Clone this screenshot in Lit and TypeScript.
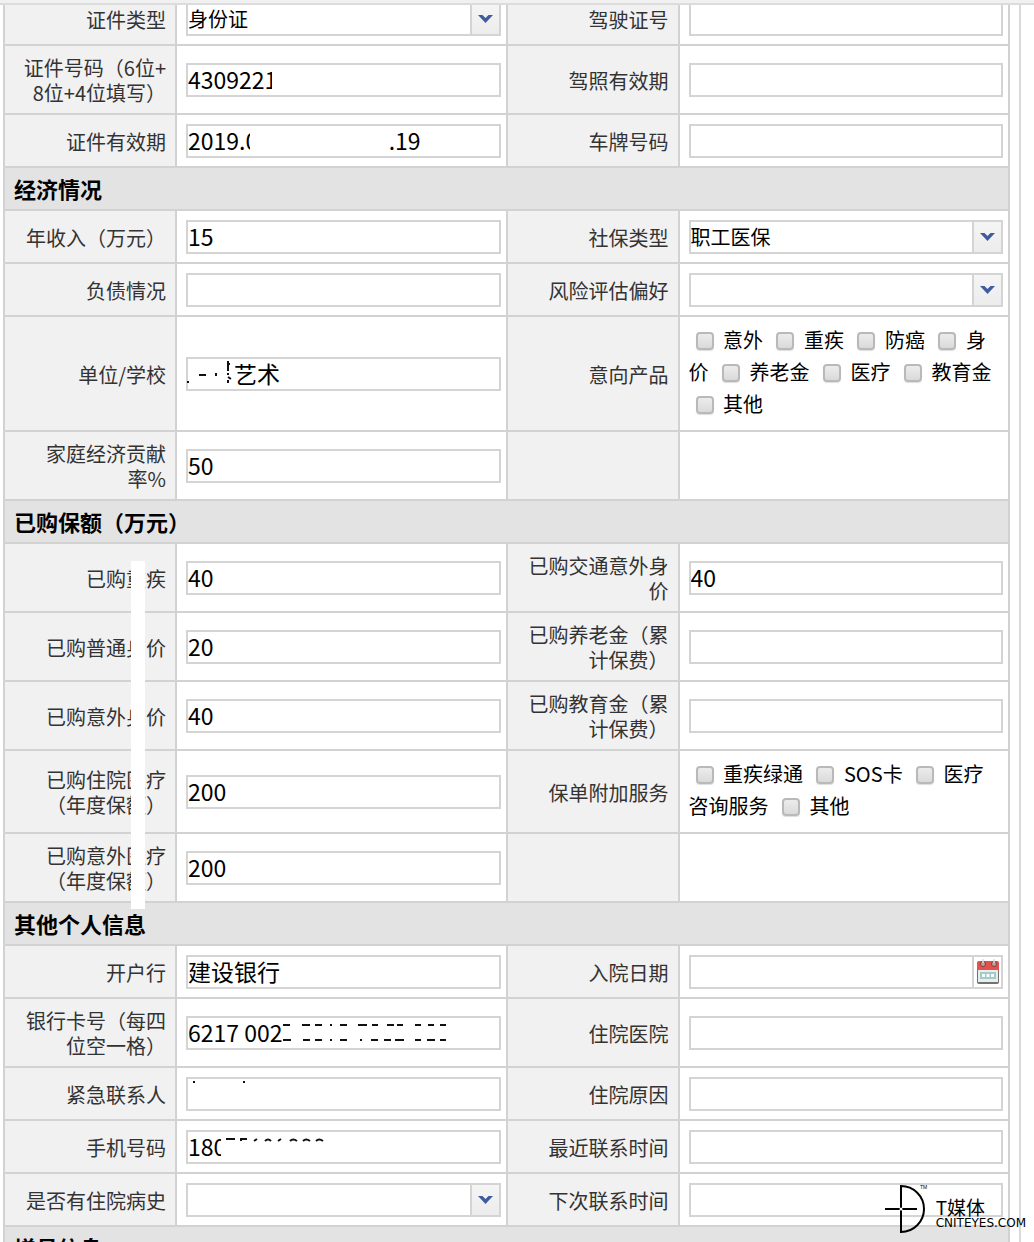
import { LitElement, html, svg, css, nothing, TemplateResult } from "lit";
import { customElement } from "lit/decorators.js";

type Field = {
  id?: string;
  label?: string;
  kind: "text" | "select" | "date" | "checks" | "empty";
  value?: string;
  options?: string[];
  cover?: [number, number][];
  marks?: string;
};

type Section = { title?: string; strip?: boolean; rows: [Field, Field][] };

const empty: Field = { kind: "empty" };
const gap = "\u3000";

const sections: Section[] = [
  {
    rows: [
      [
        { id: "idType", label: "证件类型", kind: "select", value: "身份证" },
        { id: "licenceNo", label: "驾驶证号", kind: "text" },
      ],
      [
        { id: "idNo", label: "证件号码（6位+\n8位+4位填写）", kind: "text", value: "4309221", cover: [[86, 12]] },
        { id: "licenceExpiry", label: "驾照有效期", kind: "text" },
      ],
      [
        {
          id: "idExpiry",
          label: "证件有效期",
          kind: "text",
          value: "2019.0" + gap.repeat(5) + "\u00a0\u00a0\u00a0.19",
          cover: [[64, 20]],
        },
        { id: "plate", label: "车牌号码", kind: "text" },
      ],
    ],
  },
  {
    title: "经济情况",
    rows: [
      [
        { id: "income", label: "年收入（万元）", kind: "text", value: "15" },
        { id: "social", label: "社保类型", kind: "select", value: "职工医保" },
      ],
      [
        { id: "debt", label: "负债情况", kind: "text" },
        { id: "risk", label: "风险评估偏好", kind: "select" },
      ],
      [
        {
          id: "employer",
          label: "单位/学校",
          kind: "text",
          value: gap.repeat(2) + "艺术",
          marks: "M1 25h2M13 18h7M30 16v3M42 4v10M42 7h2M42 16v2M42 20l3 2M42 23v3",
        },
        {
          id: "interest",
          label: "意向产品",
          kind: "checks",
          options: ["意外", "重疾", "防癌", "身价", "养老金", "医疗", "教育金", "其他"],
        },
      ],
      [{ id: "share", label: "家庭经济贡献\n率%", kind: "text", value: "50" }, empty],
    ],
  },
  {
    title: "已购保额（万元）",
    strip: true,
    rows: [
      [
        { id: "critical", label: "已购重疾", kind: "text", value: "40" },
        { id: "traffic", label: "已购交通意外身\n价", kind: "text", value: "40" },
      ],
      [
        { id: "life", label: "已购普通身价", kind: "text", value: "20" },
        { id: "pension", label: "已购养老金（累\n计保费）", kind: "text" },
      ],
      [
        { id: "accident", label: "已购意外身价", kind: "text", value: "40" },
        { id: "education", label: "已购教育金（累\n计保费）", kind: "text" },
      ],
      [
        { id: "hospital", label: "已购住院医疗\n（年度保额）", kind: "text", value: "200" },
        {
          id: "services",
          label: "保单附加服务",
          kind: "checks",
          options: ["重疾绿通", "SOS卡", "医疗咨询服务", "其他"],
        },
      ],
      [{ id: "accidentMed", label: "已购意外医疗\n（年度保额）", kind: "text", value: "200" }, empty],
    ],
  },
  {
    title: "其他个人信息",
    rows: [
      [
        { id: "bank", label: "开户行", kind: "text", value: "建设银行" },
        { id: "admitDate", label: "入院日期", kind: "date" },
      ],
      [
        {
          id: "card",
          label: "银行卡号（每四\n位空一格）",
          kind: "text",
          value: "6217 002",
          marks:
            "M97 9h7M116 9h8M129 9h7M144 9h2M154 9h7M172 9h9M186 9h6M201 9h7M211 9h6M229 9h6M242 9h6M254 9h6" +
            "M97 24h8M117 24h7M129 24h7M144 24h2M154 24h7M174 24h2M185 24h7M198 24h7M209 24h9M229 24h6M241 24h8M254 24h6",
        },
        { id: "hospitalName", label: "住院医院", kind: "text" },
      ],
      [
        { id: "emergency", label: "紧急联系人", kind: "text", marks: "M7 5h2M57 5h2" },
        { id: "reason", label: "住院原因", kind: "text" },
      ],
      [
        {
          id: "mobile",
          label: "手机号码",
          kind: "text",
          value: "180",
          cover: [[35, 12]],
          marks:
            "M40 9h9M55 11v-2h6M68 11l3-2M79 11q3-3 6 0M92 11l3-2M104 11q3-3 7 0M117 11q3-3 7 0M130 11q3-3 7 0",
        },
        { id: "lastContact", label: "最近联系时间", kind: "text" },
      ],
      [
        { id: "history", label: "是否有住院病史", kind: "select" },
        { id: "nextContact", label: "下次联系时间", kind: "text" },
      ],
    ],
  },
  { title: "增员信息", rows: [] },
];

const chevron = svg`<path d="M1 2h4.500l3 3 3-3h4.500l-7.500 8z" fill="#3f5c9c"/>`;

@customElement("app-root")
export class AppRoot extends LitElement {
  static styles = css`
    :host {
      display: block;
      position: relative;
      height: 100vh;
      overflow: hidden;
      background: #fff;
      color: #000;
      font-family: "Noto Sans CJK SC", sans-serif;
      font-size: 20px;
    }
    * {
      box-sizing: border-box;
    }
    .bar {
      position: relative;
      z-index: 1;
      height: 5px;
      background: #f1f1f1;
      border-bottom: 2px solid #dcdcdc;
    }
    .panel {
      margin-top: -12px;
      margin-right: 13px;
      padding: 0 9px 0 3px;
      border-right: 2px solid #d9d9d9;
    }
    .sheet {
      border-left: 2px solid #d2d2d2;
    }
    .section {
      position: relative;
    }
    .title {
      margin: 0;
      height: 43px;
      padding-left: 9px;
      line-height: 41px;
      font-size: 22px;
      font-weight: 700;
      background: #e3e3e3;
      border-right: 2px solid #d2d2d2;
      border-bottom: 2px solid #d2d2d2;
    }
    .row {
      display: grid;
      grid-template-columns: 172px 1fr 172px 1fr;
    }
    .cell {
      display: flex;
      align-items: center;
      min-width: 0;
      padding: 9px 5px 8px 9px;
      border-right: 2px solid #d2d2d2;
      border-bottom: 2px solid #d2d2d2;
    }
    .options {
      padding-top: 7px;
      padding-bottom: 10px;
    }
    .name {
      justify-content: flex-end;
      padding-right: 9px;
      padding-left: 0;
      background: #f1f1f1;
      color: #333;
      line-height: 25px;
      text-align: right;
      white-space: pre;
    }
    .box {
      flex: 1;
      display: grid;
      grid-template-columns: minmax(0, 1fr) auto;
      height: 34px;
      border: 2px solid #d4d4d4;
      background: #fff;
    }
    .input,
    .select {
      grid-area: 1 / 1 / 2 / 3;
      width: 100%;
      height: 30px;
      margin: 0;
      padding: 0 0 3px;
      border: 0;
      outline: 0;
      border-radius: 0;
      background: transparent;
      color: #000;
      font-family: inherit;
      font-size: 23px;
      appearance: none;
    }
    .select {
      font-size: 20px;
    }
    .arrow {
      grid-area: 1 / 2;
      display: flex;
      align-items: center;
      justify-content: center;
      width: 29px;
      border-left: 2px solid #d4d4d4;
      background: linear-gradient(#f5f5f5, #ececec);
      pointer-events: none;
    }
    .pick {
      grid-area: 1 / 2;
      width: 29px;
      margin: 0;
      padding: 0;
      border: 0;
      border-left: 2px solid #d4d4d4;
      background: #fff;
      line-height: 0;
    }
    .marks {
      grid-area: 1 / 1;
      width: 280px;
      height: 34px;
      margin: -2px;
      pointer-events: none;
    }
    .checks {
      line-height: 32px;
    }
    .check {
      margin-right: 2px;
    }
    .tick {
      appearance: none;
      width: 18px;
      height: 18px;
      margin: 0 5px 0 7px;
      vertical-align: -2px;
      border: 2px solid #b9b9b9;
      border-radius: 4px;
      background: linear-gradient(#ececec, #dadada);
      box-shadow: 0 1px 1px #ddd;
    }
    .strip {
      position: absolute;
      top: 60px;
      left: 126px;
      bottom: -6px;
      width: 14px;
      z-index: 1;
      background: #fff;
    }
    .brand {
      position: absolute;
      right: 8px;
      bottom: 8px;
      display: flex;
      align-items: center;
      gap: 8px;
    }
    .brand-text {
      padding-top: 8px;
    }
    .brand-name {
      font-size: 19px;
      line-height: 20px;
    }
    .brand-site {
      font-family: "DejaVu Sans", sans-serif;
      font-size: 12px;
      line-height: 12px;
    }
    .tm {
      font-family: "Liberation Sans", sans-serif;
      font-size: 5px;
    }
  `;

  private box(f: Field): TemplateResult {
    if (f.kind === "select") {
      return html`<div class="box">
        <select class="select" id=${f.id}>
          <option>${f.value ?? ""}</option>
        </select>
        <span class="arrow"><svg width="17" height="12" viewBox="0 0 17 12">${chevron}</svg></span>
      </div>`;
    }
    return html`<div class="box">
      <input class="input" id=${f.id} type="text" autocomplete="off" .value=${f.value ?? ""} />
      ${f.cover || f.marks
        ? html`<svg class="marks" aria-hidden="true">
            ${(f.cover ?? []).map(([x, w]) => svg`<rect x=${x} y="3" width=${w} height="27" fill="#fff"/>`)}
            <path d=${f.marks ?? ""} fill="none" stroke="#111" stroke-width="2" />
          </svg>`
        : nothing}
      ${f.kind === "date"
        ? html`<button class="pick" type="button" aria-label="选择日期">
            <svg width="26" height="28" viewBox="0 0 26 28">
              <rect x="2" y="4" width="22" height="22" rx="2" fill="#77706e" />
              <rect x="2" y="3" width="22" height="10" rx="2" fill="#e2514c" />
              <rect x="3" y="12" width="20" height="12" fill="#e6efef" />
              <path d="M5 14h16v7H5z" fill="#a9c9c8" />
              <path d="M7 16h3v3H7zM11.500 16h3v3h-3zM16 16h3v3h-3z" fill="#f4ffff" />
              <circle cx="8" cy="6" r="2.500" fill="#b9a3a0" stroke="#8c3a38" />
              <circle cx="19" cy="6" r="2.500" fill="#b9a3a0" stroke="#8c3a38" />
              <path d="M8 1v4M19 1v4" stroke="#ddd" stroke-width="1.500" />
            </svg>
          </button>`
        : nothing}
    </div>`;
  }

  private field(f: Field): TemplateResult {
    if (f.kind === "empty") {
      return html`<div class="cell name"></div><div class="cell"></div>`;
    }
    if (f.kind === "checks") {
      return html`<div class="cell name" id=${f.id}>${f.label}</div>
        <div class="cell options">
          <div class="checks" role="group" aria-labelledby=${f.id}>
            ${f.options!.map((o) => html`<label class="check"><input class="tick" type="checkbox" /> ${o}</label> `)}
          </div>
        </div>`;
    }
    return html`<label class="cell name" for=${f.id}>${f.label}</label>
      <div class="cell">${this.box(f)}</div>`;
  }

  render() {
    return html`
      <div class="bar"></div>
      <main class="panel">
        <form class="sheet">
          ${sections.map(
            (s) => html`<section class="section">
              ${s.title ? html`<h2 class="title">${s.title}</h2>` : nothing}
              ${s.rows.map(([a, b]) => html`<div class="row">${this.field(a)}${this.field(b)}</div>`)}
              ${s.strip ? html`<div class="strip"></div>` : nothing}
            </section>`
          )}
        </form>
      </main>
      <div class="brand">
        <svg width="44" height="50" viewBox="0 0 44 50">
          <path d="M17 2a23 23 0 0 1 0 46z" fill="none" stroke="#000" stroke-width="2" />
          <path d="M1 25h32" stroke="#000" stroke-width="2" />
          <circle cx="17" cy="25" r="1.500" fill="#fff" />
          <text class="tm" x="36" y="5">TM</text>
        </svg>
        <div class="brand-text">
          <div class="brand-name">T媒体</div>
          <div class="brand-site">CNITEYES.COM</div>
        </div>
      </div>
    `;
  }
}
